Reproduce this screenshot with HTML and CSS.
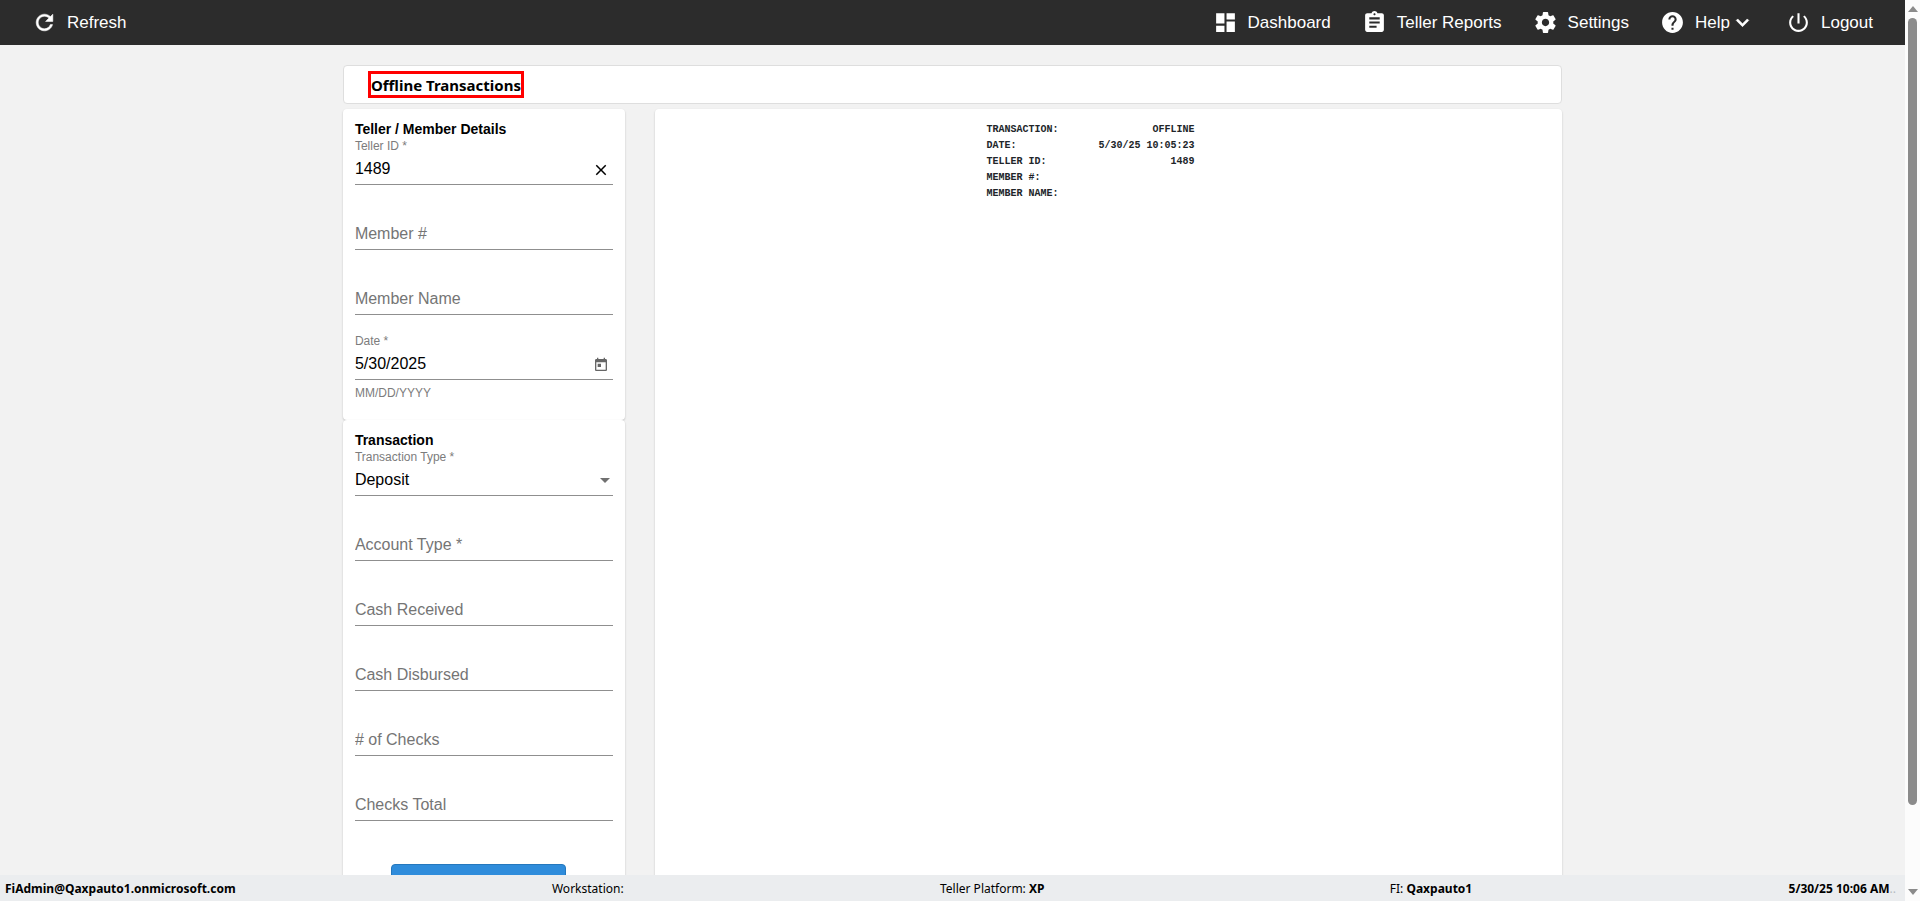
FILE: index.html
```html
<!DOCTYPE html>
<html lang="en">
<head>
<meta charset="utf-8">
<title>Offline Transactions</title>
<link rel="stylesheet" href="styles.css">
</head>
<body>
<div class="window">
  <div class="app">
    <header class="topbar">
      <button class="nav-item" type="button">
        <svg class="nav-icon" viewBox="0 0 24 24"><path d="M17.65 6.35C16.2 4.9 14.21 4 12 4c-4.42 0-7.99 3.58-7.99 8s3.57 8 7.99 8c3.73 0 6.84-2.55 7.73-6h-2.08c-.82 2.33-3.04 4-5.65 4-3.31 0-6-2.69-6-6s2.69-6 6-6c1.66 0 3.14.69 4.22 1.78L13 11h7V4l-2.35 2.35z" stroke="#fff" stroke-width=".5"/></svg>
        <span>Refresh</span>
      </button>
      <nav class="nav">
        <a class="nav-item" href="#dashboard">
          <svg class="nav-icon" viewBox="0 0 24 24"><path d="M3 13h8V3H3v10zm0 8h8v-6H3v6zm10 0h8V11h-8v10zm0-18v6h8V3h-8z"/></svg>
          <span>Dashboard</span>
        </a>
        <a class="nav-item" href="#reports">
          <svg class="nav-icon" viewBox="0 0 24 24"><path d="M19 3h-4.180C14.400 1.840 13.300 1 12 1c-1.300 0-2.400.84-2.820 2H5c-1.100 0-2 .9-2 2v14c0 1.100.9 2 2 2h14c1.100 0 2-.9 2-2V5c0-1.100-.9-2-2-2zm-7 0c.55 0 1 .45 1 1s-.45 1-1 1-1-.45-1-1 .45-1 1-1zm2 14H7v-2h7v2zm3-4H7v-2h10v2zm0-4H7V7h10v2z"/></svg>
          <span>Teller Reports</span>
        </a>
        <a class="nav-item" href="#settings">
          <svg class="nav-icon" viewBox="0 0 24 24"><path d="M19.430 12.980c.04-.32.07-.64.07-.98s-.03-.66-.07-.98l2.110-1.650c.19-.15.24-.42.12-.64l-2-3.460c-.12-.22-.39-.3-.61-.22l-2.490 1c-.52-.4-1.080-.73-1.690-.98l-.38-2.650C14.460 2.180 14.250 2 14 2h-4c-.25 0-.46.18-.49.42l-.38 2.650c-.61.25-1.170.59-1.690.98l-2.490-1c-.23-.09-.49 0-.61.22l-2 3.460c-.13.22-.07.49.12.64l2.110 1.650c-.04.32-.07.65-.07.98s.03.66.07.98l-2.110 1.650c-.19.15-.24.42-.12.64l2 3.460c.12.22.39.3.61.22l2.490-1c.52.4 1.080.73 1.690.98l.38 2.650c.03.24.24.42.49.42h4c.25 0 .46-.18.49-.42l.38-2.650c.61-.25 1.170-.59 1.690-.98l2.490 1c.23.09.49 0 .61-.22l2-3.460c.12-.22.07-.49-.12-.64l-2.110-1.650zM12 15.500c-1.930 0-3.500-1.570-3.500-3.500s1.570-3.500 3.500-3.500 3.500 1.570 3.500 3.500-1.570 3.500-3.500 3.500z"/></svg>
          <span>Settings</span>
        </a>
        <button class="nav-item" type="button">
          <svg class="nav-icon" viewBox="0 0 24 24"><path d="M12 2C6.480 2 2 6.480 2 12s4.480 10 10 10 10-4.480 10-10S17.520 2 12 2zm1 17h-2v-2h2v2zm2.070-7.750l-.9.92C13.450 12.900 13 13.500 13 15h-2v-.5c0-1.100.45-2.100 1.170-2.830l1.240-1.260c.37-.36.59-.86.59-1.410 0-1.100-.9-2-2-2s-2 .9-2 2H8c0-2.210 1.790-4 4-4s4 1.790 4 4c0 .88-.36 1.680-.93 2.250z"/></svg>
          <span class="nav-menu">Help<svg class="nav-icon" viewBox="0 0 24 24"><path d="M16.590 8.590L12 13.170 7.410 8.590 6 10l6 6 6-6z" stroke="#fff" stroke-width=".6"/></svg></span>
        </button>
        <a class="nav-item" href="#logout">
          <svg class="nav-icon" viewBox="0 0 24 24"><path d="M13 3h-2v10h2V3zm4.830 2.170l-1.420 1.420C17.990 7.860 19 9.810 19 12c0 3.870-3.130 7-7 7s-7-3.130-7-7c0-2.190 1.010-4.140 2.580-5.420L6.170 5.170C4.230 6.820 3 9.260 3 12c0 4.970 4.030 9 9 9s9-4.030 9-9c0-2.740-1.230-5.180-3.170-6.830z"/></svg>
          <span>Logout</span>
        </a>
      </nav>
    </header>

    <main class="content">
      <div class="title-card"><h1 class="title">Offline Transactions</h1></div>
      <div class="columns">
        <form class="forms">
          <section class="panel form-panel">
            <h2 class="panel-title">Teller / Member Details</h2>
            <div class="field">
              <label class="field-label" for="teller">Teller ID *</label>
              <div class="control">
                <input class="input" id="teller" type="text" value="1489">
                <button class="icon-button" type="button" aria-label="Clear"><svg class="clear-icon" viewBox="0 0 24 24"><path d="M19 6.410L17.590 5 12 10.590 6.410 5 5 6.410 10.590 12 5 17.590 6.410 19 12 13.410 17.590 19 19 17.590 13.410 12z"/></svg></button>
              </div>
            </div>
            <div class="field empty"><div class="control"><input class="input" type="text" aria-label="Member #" placeholder="Member #"></div></div>
            <div class="field empty"><div class="control"><input class="input" type="text" aria-label="Member Name" placeholder="Member Name"></div></div>
            <div class="field">
              <label class="field-label" for="date">Date *</label>
              <div class="control">
                <input class="input" id="date" type="text" value="5/30/2025" aria-describedby="date-hint">
                <button class="icon-button" type="button" aria-label="Open calendar"><svg class="calendar-icon" viewBox="0 0 24 24"><path d="M19 3h-1V1h-2v2H8V1H6v2H5c-1.110 0-1.990.9-1.990 2L3 19c0 1.100.89 2 2 2h14c1.100 0 2-.9 2-2V5c0-1.100-.9-2-2-2zm0 16H5V8h14v11zM7 10h5v5H7z"/></svg></button>
              </div>
            </div>
            <p class="hint" id="date-hint">MM/DD/YYYY</p>
          </section>

          <section class="panel form-panel">
            <h2 class="panel-title">Transaction</h2>
            <div class="field">
              <label class="field-label" for="type">Transaction Type *</label>
              <div class="control">
                <select class="input select" id="type"><option>Deposit</option></select>
                <svg class="caret" viewBox="0 0 10 5"><path d="M0 0h10L5 5z"/></svg>
              </div>
            </div>
            <div class="field empty"><div class="control"><input class="input" type="text" aria-label="Account Type" placeholder="Account Type *"></div></div>
            <div class="field empty"><div class="control"><input class="input" type="text" aria-label="Cash Received" placeholder="Cash Received"></div></div>
            <div class="field empty"><div class="control"><input class="input" type="text" aria-label="Cash Disbursed" placeholder="Cash Disbursed"></div></div>
            <div class="field empty"><div class="control"><input class="input" type="text" aria-label="# of Checks" placeholder="# of Checks"></div></div>
            <div class="field empty"><div class="control"><input class="input" type="text" aria-label="Checks Total" placeholder="Checks Total"></div></div>
            <button class="submit" type="submit" aria-label="Submit"></button>
          </section>
        </form>

        <section class="panel receipt-panel">
          <dl class="receipt">
            <div class="receipt-row"><dt>TRANSACTION:</dt><dd>OFFLINE</dd></div>
            <div class="receipt-row"><dt>DATE:</dt><dd>5/30/25 10:05:23</dd></div>
            <div class="receipt-row"><dt>TELLER ID:</dt><dd>1489</dd></div>
            <div class="receipt-row"><dt>MEMBER #:</dt><dd></dd></div>
            <div class="receipt-row"><dt>MEMBER NAME:</dt><dd></dd></div>
          </dl>
        </section>
      </div>
    </main>

    <footer class="statusbar">
      <strong>FiAdmin@Qaxpauto1.onmicrosoft.com</strong>
      <span>Workstation:</span>
      <span class="platform">Teller Platform: <strong>XP</strong></span>
      <span>FI: <strong>Qaxpauto1</strong></span>
      <span><strong>5/30/25 10:06 AM</strong><span class="faint">..</span></span>
    </footer>
  </div>

  <div class="scrollbar" aria-hidden="true">
    <svg class="scroll-arrow" viewBox="0 0 10 6"><path d="M0 6L5 0l5 6z"/></svg>
    <div class="track"><div class="thumb"></div></div>
    <svg class="scroll-arrow" viewBox="0 0 10 6"><path d="M0 0h10L5 6z"/></svg>
  </div>
</div>
</body>
</html>
```

FILE: styles.css
```css
* {
  box-sizing: border-box;
}

body {
  margin: 0;
  background: #f2f2f2;
  color: #000;
  font-family: "Liberation Sans", Arial, sans-serif;
  font-size: 16px;
}

button,
input,
select {
  font: inherit;
  color: inherit;
}

.window {
  display: flex;
  height: 100vh;
}

.app {
  flex: 1;
  min-width: 0;
  display: flex;
  flex-direction: column;
}

/* Top bar */
.topbar {
  flex: none;
  display: flex;
  justify-content: space-between;
  align-items: center;
  padding: 10px 32px;
  background: #2c2c2c;
  color: #fff;
}

.nav {
  display: flex;
  gap: 31px;
}

.nav-item {
  display: flex;
  align-items: center;
  gap: 10px;
  padding: 0;
  border: 0;
  background: none;
  color: #fff;
  font-size: 17px;
  line-height: 25px;
  text-decoration: none;
}

.nav-menu {
  display: flex;
}

.nav-icon {
  width: 25px;
  height: 25px;
  fill: #fff;
}

/* Page */
.content {
  flex: 1;
  min-height: 0;
  overflow: hidden;
  padding: 20px 18% 0;
}

.title-card {
  display: flex;
  padding: 5px 24px;
  border: 1px solid #dedede;
  border-radius: 4px;
  background: #fff;
}

.title {
  margin: 0;
  padding-top: 2px;
  border: 3px solid #f00;
  font-family: "Noto Sans", "Open Sans", sans-serif;
  font-size: 15px;
  line-height: 19px;
  font-weight: 700;
}

.columns {
  display: grid;
  grid-template-columns: 282px 1fr;
  gap: 30px;
  margin-top: 5px;
}

.panel {
  border-radius: 4px;
  background: #fff;
  box-shadow: 0 1px 2px rgba(0, 0, 0, 0.22);
}

.form-panel {
  padding: 12px 12px 18px;
}

.panel-title {
  margin: 0;
  font-size: 14px;
  line-height: 17px;
  font-weight: 700;
}

.field {
  margin-bottom: 18px;
}

.field-label {
  display: block;
  color: #7c7c7c;
  font-size: 12px;
  line-height: 16px;
}

.empty {
  padding-top: 16px;
}

.control {
  display: flex;
  align-items: center;
  padding-right: 3px;
  border-bottom: 1px solid #8f8f8f;
}

.input {
  flex: 1;
  min-width: 0;
  height: 30px;
  padding: 0;
  border: 0;
  outline: 0;
  background: none;
  appearance: none;
}

.select {
  padding-bottom: 1px;
}

.input::placeholder {
  color: #757575;
  opacity: 1;
}

.icon-button {
  display: flex;
  justify-content: center;
  width: 18px;
  padding: 2px 0 0;
  border: 0;
  background: none;
}

.clear-icon {
  width: 18px;
  height: 18px;
}

.calendar-icon {
  width: 16px;
  height: 16px;
  fill: #666;
}

.caret {
  width: 10px;
  height: 5px;
  fill: #707070;
}

.hint {
  margin: -13px 0 1px;
  color: #7c7c7c;
  font-size: 12px;
  line-height: 16px;
}

.submit {
  display: block;
  width: 175px;
  height: 36px;
  margin: 43px 0 0 36px;
  border: 1px solid #2578bd;
  border-radius: 4px;
  background: #2f8cdb;
}

/* Receipt */
.receipt-panel {
  display: flex;
  justify-content: center;
  padding: 13px 36px 12px 0;
}

.receipt {
  width: 208px;
  margin: 0;
  color: #212529;
  font-family: "Liberation Mono", monospace;
  font-size: 10px;
  line-height: 16px;
  font-weight: 700;
}

.receipt-row {
  display: flex;
  justify-content: space-between;
}

.receipt-row dd {
  margin: 0;
}

/* Status bar */
.statusbar {
  flex: none;
  display: flex;
  justify-content: space-between;
  padding: 5px 9px 3px 5px;
  background: #ebedef;
  font-family: "Noto Sans", "Open Sans", sans-serif;
  font-size: 12px;
  line-height: 18px;
}

.platform {
  margin-right: 29px;
}

.faint {
  color: #b5bcc2;
}

/* Scrollbar */
.scrollbar {
  flex: none;
  display: flex;
  flex-direction: column;
  align-items: center;
  gap: 6px;
  width: 15px;
  padding: 6px 0;
  background: #fcfcfc;
}

.scroll-arrow {
  width: 10px;
  height: 6px;
  fill: #8b8b8b;
}

.track {
  flex: 1;
  width: 9px;
}

.thumb {
  height: 91%;
  border-radius: 5px;
  background: #8b8b8b;
}
```
